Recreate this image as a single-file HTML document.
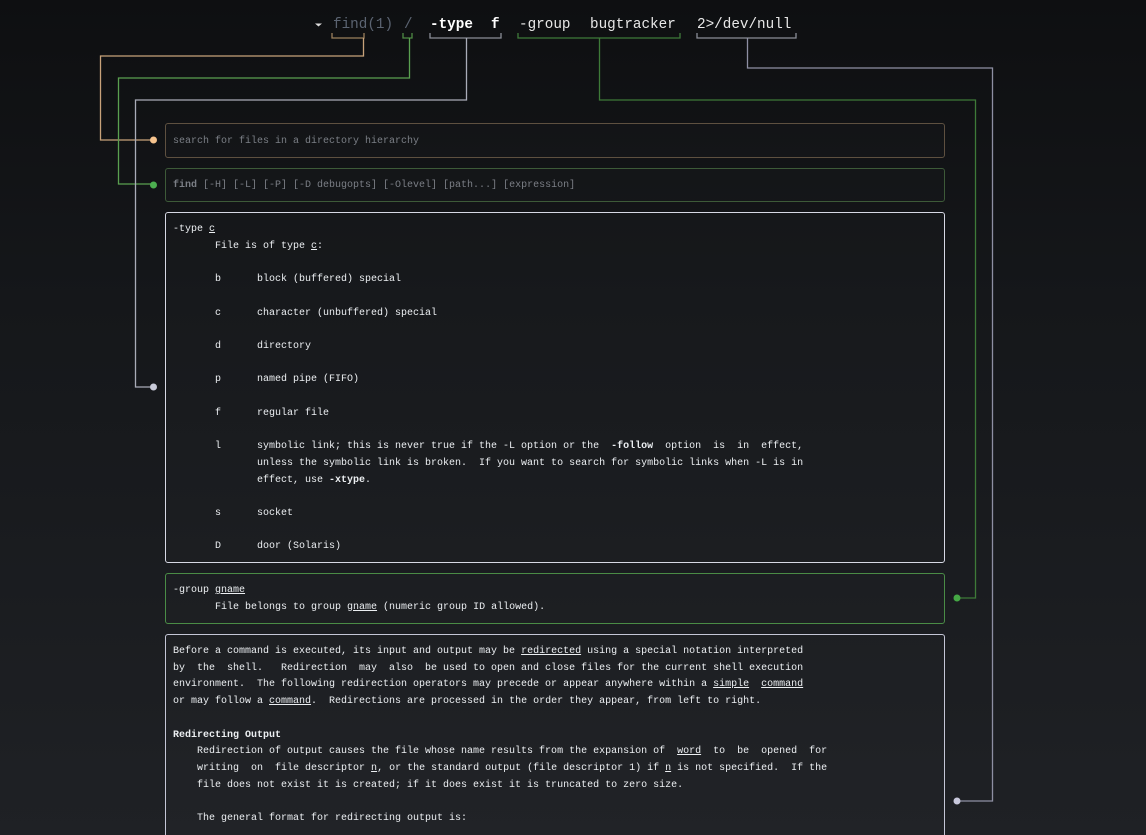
<!DOCTYPE html>
<html><head><meta charset="utf-8"><style>
html,body{margin:0;padding:0;overflow:hidden;width:1146px;height:835px}
body{position:relative;background:linear-gradient(#0e0f11 0px,#15171a 300px,#1f2125 835px);font-family:"Liberation Mono",monospace}
.cmd{position:absolute;top:17px;left:0;font-size:14.3px;color:#e8e8e8;white-space:pre;font-family:"Liberation Mono",monospace}
.cmd span{position:absolute;top:0}
.box{position:absolute;left:165px;width:764px;border:1px solid;border-radius:3px;padding:0 7px;background:rgba(255,255,255,0.012);box-sizing:content-box}
pre{margin:0;font-family:"Liberation Mono",monospace;font-size:10px;line-height:16.7px;color:#eceff2}
u{text-decoration:underline}
svg{position:absolute;left:0;top:0}
</style></head><body>
<svg width="1146" height="835">
<g fill="none" stroke-width="1.3">
<path d="M332 33v5h32v-5" stroke="#9b7f5c"/>
<path d="M403 33v5h9v-5" stroke="#4e8a44"/>
<path d="M430 33v5h71v-5" stroke="#8a8d96"/>
<path d="M518 33v5h162v-5" stroke="#3f7a3a"/>
<path d="M697 33v5h99v-5" stroke="#8a8d96"/>
<path d="M363.5 38v18H100.5v84H153" stroke="#c8a27a"/>
<path d="M409.5 38v40H118.5v106H153" stroke="#5aa050"/>
<path d="M466.5 38v62H135.5v287H153" stroke="#a9acb8"/>
<path d="M599.5 38v62H975.5v498H957" stroke="#3e7a38"/>
<path d="M747.5 38v30H992.5v733H957" stroke="#8e8fa3"/>
</g>
<circle cx="153.5" cy="140" r="3.5" fill="#f6c38e"/>
<circle cx="153.5" cy="185" r="3.5" fill="#4caf50"/>
<circle cx="153.5" cy="387" r="3.5" fill="#c8cad8"/>
<circle cx="957" cy="598" r="3.5" fill="#45a845"/>
<circle cx="957" cy="801" r="3.5" fill="#c8c8dc"/>
<path d="M315 23.5h7l-3.5 3z" fill="#ddd"/>
</svg>
<div class="cmd">
<span style="left:333px;color:#5b6472">find(1)</span><span style="left:404px;color:#5b6472">/</span><span style="left:430px;font-weight:bold;color:#fff">-type</span><span style="left:491px;font-weight:bold;color:#fff">f</span><span style="left:519px">-group</span><span style="left:590px">bugtracker</span><span style="left:697px">2&gt;/dev/null</span>
</div>
<div class="box" style="top:123px;height:33px;border-color:#5e5040"><pre style="padding-top:10px;color:#7b7f86">search for files in a directory hierarchy</pre></div>
<div class="box" style="top:168px;height:32px;border-color:#3d5a38"><pre style="padding-top:9px;color:#7b7f86"><b>find</b> [-H] [-L] [-P] [-D debugopts] [-Olevel] [path...] [expression]</pre></div>
<div class="box" style="top:212px;height:349px;border-color:#d6d8e4"><pre style="padding-top:9px">-type <u>c</u>
       File is of type <u>c</u>:

       b      block (buffered) special

       c      character (unbuffered) special

       d      directory

       p      named pipe (FIFO)

       f      regular file

       l      symbolic link; this is never true if the -L option or the  <b>-follow</b>  option  is  in  effect,
              unless the symbolic link is broken.  If you want to search for symbolic links when -L is in
              effect, use <b>-xtype</b>.

       s      socket

       D      door (Solaris)</pre></div>
<div class="box" style="top:573px;height:49px;border-color:#4a8c46"><pre style="padding-top:9px">-group <u>gname</u>
       File belongs to group <u>gname</u> (numeric group ID allowed).</pre></div>
<div class="box" style="top:634px;height:205px;border-color:#c4c6d6"><pre style="padding-top:9px">Before a command is executed, its input and output may be <u>redirected</u> using a special notation interpreted
by  the  shell.   Redirection  may  also  be used to open and close files for the current shell execution
environment.  The following redirection operators may precede or appear anywhere within a <u>simple</u>  <u>command</u>
or may follow a <u>command</u>.  Redirections are processed in the order they appear, from left to right.

<b>Redirecting Output</b>
    Redirection of output causes the file whose name results from the expansion of  <u>word</u>  to  be  opened  for
    writing  on  file descriptor <u>n</u>, or the standard output (file descriptor 1) if <u>n</u> is not specified.  If the
    file does not exist it is created; if it does exist it is truncated to zero size.

    The general format for redirecting output is:</pre></div>
</body></html>
